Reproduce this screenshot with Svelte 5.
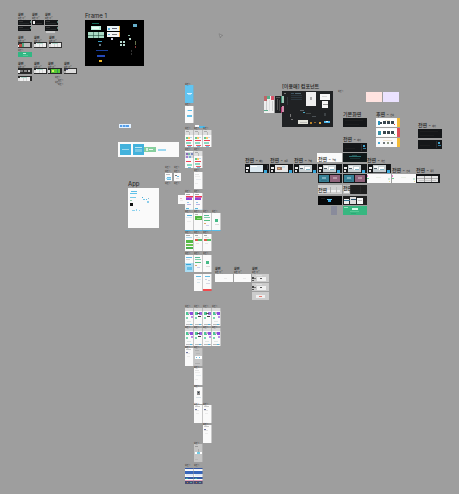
<script>
  // Details are [x, y, width, height, colour], relative to the frame they sit in.
  const art = {
    none: [],
    splash: [[2, 8, 5, 1, '#d8f1ff'], [3, 9, 3, 1, '#a5ddf8']],
    intro: [[3, 4, 4, 1, '#5bbce8'], [2, 9, 5, 2, '#63c0ea'], [2, 4, 1, 1, '#c0e3f3']],
    home: [[0, 0, 9, 5, '#dedede'], [1, 1, 3, 1, '#aaa'], [4, 2, 1, 3, '#bbb'], [1, 7, 2, 2, '#62c78b'], [3, 7, 2, 2, '#ffc36e'], [5, 7, 2, 1, '#b9d8e8'], [1, 10, 6, 1, '#ed4056'], [1, 12, 5, 2, '#8ad9c2'], [2, 15, 5, 1, '#e85d69'], [3, 16, 3, 1, '#71c5e8']],
    mosaic: [[0, 1, 9, 6, '#d8d8df'], [1, 2, 2, 2, '#8a69b8'], [3, 2, 2, 2, '#75b5a5'], [6, 2, 2, 2, '#7b88bd'], [1, 5, 2, 2, '#a67bd0'], [4, 5, 2, 2, '#74b1d2'], [1, 10, 5, 1, '#ef4055'], [2, 13, 5, 2, '#8bdac2'], [3, 16, 3, 1, '#71c5e8']],
    plain: [[1, 2, 4, .5, '#ccc'], [1, 4, 5, .5, '#ddd'], [2, 7, 5, .5, '#d2dce2'], [1, 11, 3, .5, '#ddd']],
    purple: [[1, 1, 4, 1, '#aaa'], [1, 3, 7, 1.5, '#ef344b'], [1, 4.5, 6, 2.5, '#8c45d6'], [4, 4.5, 3, 1, '#d146bd'], [2, 9, 2, 1, '#91c6e8'], [2, 11, 4, 1, '#b9b3e4'], [1, 15, 3, 1, '#5db7d9'], [0, 16, 9, .5, '#b7dff0']],
    login: [[2, 2, 5, 1, '#51aeda'], [1, 4, 6, .5, '#b9dceb'], [2, 8, 4, .5, '#ddd'], [0, 17, 9, 1, '#57bde9']],
    lime: [[1, 1, 3, .5, '#777'], [1, 3, 7, 4, '#50b642'], [3, 5, 4, 1, '#92db7d'], [0, 17, 9, 1, '#57bde9']],
    green: [[1, 2, 5, 1, '#56ba98'], [1, 4, 6, 1, '#80cfae'], [1, 7, 6, 1, '#54bd82'], [1, 10, 2, 1, '#dda36d'], [3, 12, 3, .5, '#a1a1dd'], [0, 17, 9, 1, '#57bde9']],
    done: [[3, 6, 3, 3, '#45ba87'], [3, 11, 4, .5, '#bbb'], [0, 17, 9, 1, '#57bde9']],
    greens: [[1, 1, 4, 1, '#aaa'], [1, 3, 6, .5, '#67bce4'], [1, 6, 7, 3, '#55b947'], [1, 10, 7, 2, '#6bc34e'], [1, 13, 7, 2, '#49af4b']],
    mixed: [[1, 1, 3, 1, '#aaa'], [2, 3, 4, .5, '#ccc'], [1, 5, 3, 2, '#dd5a47'], [4, 5, 4, 2, '#55bd67'], [2, 9, 3, .5, '#ccc']],
    sky: [[1, 2, 6, 1, '#66bee6'], [1, 4, 4, .5, '#bbb'], [0, 8, 9, 9, '#a9dcf3'], [1, 9, 5, 1, '#33a5d8'], [2, 12, 5, 3, '#66bfe7']],
    redend: [[2, 2, 5, 1, '#61bce4'], [2, 5, 2, 1, '#ccd2e0'], [5, 6, 2, 1, '#ccd2e0'], [3, 9, 4, 1, '#d6d8e2'], [0, 15, 9, 2, '#f14a4d']],
    signup: [[2, 2, 5, 1, '#61bce4'], [3, 5, 4, .5, '#b9deed'], [3, 8, 3, 1, '#d4e3e9']],
    event: [[0, 0, 9, 3, '#d9d9d9'], [1, 4, 3, 3, '#4fc894'], [5, 4, 3, 3, '#8d4cdc'], [3, 4, 2, 2, '#c7aed0'], [1, 9, 2, 2, '#7cd6ae'], [6, 8, 2, 2, '#bb91e8'], [2, 13, 4, 1, '#dfe6e4'], [1, 16, 7, 1, '#bbb'], [5, 16, 2, 1, '#55b8df']],
    eventdark: [[0, 0, 9, 3, '#d9d9d9'], [1, 4, 3, 3, '#4fc894'], [5, 4, 3, 3, '#9b66de'], [3, 5, 3, 1, '#555'], [4, 8, 3, 1, '#444'], [1, 9, 2, 2, '#7cd6ae'], [1, 16, 7, 1, '#bbb'], [5, 16, 2, 1, '#55b8df']],
    dialog: [[1, 2, 4, .5, '#999'], [2, 5, 4, .5, '#aaa'], [1, 8, 7, 3, '#fff'], [2, 9, 1, 1, '#67bde4'], [5, 9, 1, 1, '#67bde4'], [1, 15, 5, .5, '#999']],
    badge: [[3, 4, 3, 4, '#888'], [4, 5, 1, 1, '#234'], [2, 10, 5, .5, '#b5cbd5']],
    list: [[1, 1, 5, .5, '#999'], [1, 4, 2, 1, '#6f78a5'], [1, 5, 4, .5, '#ccc'], [2, 8, 3, .5, '#ddd']],
    dialog2: [[1, 2, 3, 1, '#999'], [4, 5, 1, 3, '#aaa'], [1, 8, 7, 2, '#fff'], [3, 8, 3, 2, '#71cbe6'], [1, 15, 3, .5, '#aaa']],
    blue: [[0, 0, 9, 1, '#3558a4'], [1, 1, 7, .5, '#e7ecf5'], [0, 3, 9, 3, '#3765ba'], [1, 6, 7, 2, '#e0e8f5'], [0, 9, 9, 2, '#3058a5'], [1, 10, 2, 1, '#3aa79b'], [0, 12, 9, 1, '#e5a8bc'], [0, 13, 9, 3, '#4a4d73'], [2, 14, 1, 1, '#bc7f42'], [5, 14, 2, 1, '#559f9f']],
    frame1: [[7, 3, 7, 1, '#126b5a'], [6, 6, 10, 4, '#baf0dc'], [7, 7, 7, 2, '#e9fff7'], [3, 12, 16, 6, '#a8d9c3'], [8, 12, .5, 6, '#173d2e'], [13, 12, .5, 6, '#173d2e'], [3, 15, 16, .5, '#173d2e'], [22, 6, 13, 5, '#eaf4f7'], [23, 8, 2, 2, '#59b4dd'], [27, 8, 5, 1, '#667'], [34, 6, 1, 5, '#f3b84b'], [22, 12, 13, 5, '#f3f3f3'], [23, 14, 2, 1, '#59b4dd'], [27, 14, 5, 1, '#777'], [34, 12, 1, 5, '#f3a84b'], [48, 4, 4, 3, '#65aeca'], [26, 18, 2, 2, '#ccd'], [35, 21, 2, 2, '#b5d8ce'], [38, 21, 2, 2, '#b5d8ce'], [35, 24, 2, 2, '#b5d8ce'], [38, 24, 2, 2, '#b5d8ce'], [43, 15, 2, 1, '#8cb8a4'], [44, 18, 2, 2, '#bcd7cd'], [13, 21, 4, 1, '#379cc5'], [14, 24, 2, 2, '#627784'], [11, 30, 12, 1, '#183d9c'], [12, 35, 8, 2, '#2549b7'], [14, 40, 3, 2, '#edb72d'], [50, 21, 1, 4, '#65714d'], [50, 26, 1, 2, '#8c3b3b'], [46, 30, 1, 2, '#333'], [46, 33, 1, 2, '#333']],
    app: [[3, 3, 6, 1, '#5dbde6'], [2, 5, 7, 1, '#62c3ea'], [2, 9, 6, 1, '#79cbea'], [2, 12, 2, 1, '#98c9ad'], [2, 15, 3, 3, '#111'], [14, 9, 1, 1, '#4aafd9'], [15, 11, 2, 1, '#72c5e8'], [18, 11, 1, 1, '#5bbbe5'], [19, 13, 2, 2, '#8ccdea'], [20, 10, 1, 1, '#87bdd2'], [4, 22, 3, 1, '#8cd2ee'], [8, 21, 1, 2, '#8cd2ee'], [11, 22, 1, 1, '#8cd2ee']],
    banner: [[2, 2, 11, 11, '#43b2dc'], [4, 7, 7, 1, '#9cd8ed'], [15, 2, 11, 11, '#43b2dc'], [17, 5, 7, 1, '#bce6f3'], [17, 7, 7, 3, '#79c7e2'], [26, 5, 12, 5, '#86cf9e'], [28, 6, 2, 3, '#d9f1e0'], [31, 7, 4, 1, '#eaf8ee'], [40, 7, 8, 2, '#9bd7f0']],
    chip: [[1, 1, 9, 2, '#559ee9'], [3, 1, 1, 2, '#b4d5f4'], [6, 1, 1, 2, '#8fbff0']],
    mini: [[1, 1, 4, 1, '#bbb'], [2, 4, 4, 3, '#69bee8'], [1, 5, 5, 1, '#ace0f4']],
    mini2: [[1, 2, 2, 1, '#777'], [3, 3, 2, 1, '#67b5df'], [2, 5, 3, .5, '#bbb']],
    pinkdot: [[2, 3, 2, 1, '#f0bfcb'], [2, 5, 3, .5, '#ddd']],
    darkrow: [[1, 1, 4, .5, '#555'], [1, 3, 10, .5, '#353b3b'], [12, 1, 1, 2, '#557f78']],
    darkwhite: [[1, 1, 2, 3, '#eee'], [4, 3, 6, .5, '#444']],
    lightrow: [[2, 1, 10, 4, '#eee'], [0, 2, 2, 3, '#ddd'], [5, 2, .5, 3, '#bbb'], [8, 2, .5, 3, '#bbb'], [3, 1, 6, .5, '#6ebea6']],
    redrow: [[1, 2, 3, 3, '#be4d43'], [4, 1, 2, 4, '#4fa480'], [6, 1, 6, 4, '#bbb'], [0, 3, 1, 2, '#eee']],
    darkcards: [[0, 2, 2, 3, '#eee'], [2, 2, 3, 2, '#777'], [6, 2, 3, 2, '#888'], [10, 2, 2, 2, '#bbb']],
    limerow: [[0, 2, 2, 3, '#ddd'], [3, 1, 9, 4, '#58ca36'], [4, 2, 2, 2, '#d4f063'], [9, 1, 1, 4, '#319d54']],
    wide: [[0, 3, 2, 2, '#aaa'], [2, 1, 10, 4, '#ddd'], [2, 1, 2, 1, '#558']],
    greenpanel: [[5, 1, 3, 1, '#b8f1d8'], [5, 3, 5, .5, '#78d5ad']],
    components: [[2, 2, 2, 1, '#777'], [9, 2, 3, 1, '#3c5261'], [13, 2, 6, 1, '#526671'], [9, 4, 11, .5, '#384d5b'], [9, 6, 11, .5, '#384d5b'], [9, 8, 11, .5, '#384d5b'], [5, 6, 1, 8, '#35393d'], [24, 1, 10, 14, '#eee'], [28, 6, 2, 3, '#aaa'], [38, 3, 10, 6, '#f6f6f6'], [40, 5, 5, .5, '#bbb'], [40, 10, 6, 7, '#f6f6f6'], [41, 13, 5, .5, '#333'], [18, 19, 4, 1, '#5a6369'], [21, 21, 2, 1, '#49a8c2'], [24, 22, 5, .5, '#6a736c'], [30, 25, 4, .5, '#768087'], [8, 23, 1, 3, '#777'], [9, 28, 2, 1, '#777'], [42, 22, 2, 3, '#3d4245'], [16, 29, 10, 4, '#e4e4dc'], [18, 31, 7, .5, '#999'], [28, 31, 2, 2, '#bd8428'], [32, 31, 2, 1, '#8c612a'], [37, 31, 2, 2, '#d9a341'], [42, 30, 6, 2, '#4bb7ec'], [44, 30, 2, 1, '#d7f0fd'], [1, 17, 1, 4, '#9a578a']],
    strips: [[0, 0, 3, 5, '#bd6568'], [3, 0, 3, 3, '#54b28d'], [7, 0, 3, 4, '#d95268'], [2, 5, 1, 10, '#ccc'], [5, 4, 1, 11, '#ddd'], [8, 5, 1, 10, '#ccc'], [0, 14, 4, 1, '#5aae8c']],
    strips2: [[1, 1, 4, 1, '#555'], [2, 3, 1, 11, '#555'], [4, 4, 1, 11, '#444'], [6, 0, 1, 7, '#3a8e72'], [6, 11, 1, 6, '#b53875'], [7, 0, 2, 7, '#9dc8b7'], [7, 10, 2, 6, '#cf8ca8']],
    console: [[1, 3, 3, 2, '#eee'], [1, 6, 2, 2, '#ddd'], [5, 1, 13, 7, '#dbe8f0'], [6, 2, 6, 1, '#fff'], [19, 6, 3, 3, '#38a8dc'], [22, 1, 1, 4, '#363b43'], [5, 8, 13, .5, '#6c7479']],
    console2: [[1, 3, 3, 2, '#eee'], [1, 6, 2, 2, '#ddd'], [5, 1, 13, 7, '#e8e8e8'], [7, 3, 5, 3, '#9b7565'], [8, 4, 2, 1, '#e1b36c'], [12, 2, 3, 2, '#c7dfeb'], [19, 6, 3, 3, '#38a8dc'], [5, 8, 13, .5, '#6c7479']],
    console3: [[1, 3, 3, 2, '#eee'], [1, 6, 2, 2, '#ddd'], [5, 1, 13, 7, '#c8d0d3'], [6, 2, 4, 3, '#f3f3f3'], [11, 3, 5, 3, '#fff'], [6, 4, 3, 1, '#52616c'], [12, 5, 4, 1, '#82b4c6'], [19, 6, 3, 3, '#38a8dc'], [5, 8, 13, .5, '#6c7479']],
    clock: [[18, 1, .5, 7, '#444'], [20, 2, 2, 2, '#46a6cf'], [20, 5, 3, 1, '#367e9d'], [2, 5, 10, .5, '#272727']],
    dark: [[2, 2, 18, .5, '#262626'], [2, 6, 14, .5, '#242424']],
    terminal: [[6, 3, 12, 1, '#2b7272'], [9, 2, 5, .5, '#357d7d'], [7, 5, 10, .5, '#225252']],
    pair: [[1, 1, 10, 7, '#377f94'], [12, 1, 10, 7, '#90637b'], [4, 3, 4, 2, '#79adba'], [15, 3, 4, 2, '#b798a8'], [3, 6, 6, .5, '#285e70']],
    choice: [[1, 1, 22, 7, '#fff'], [2, 3, 2, 4, '#2892bb'], [4, 4, 2, 2, '#36434c'], [7, 3, 3, 3, '#39474f'], [11, 3, 3, 3, '#39474f'], [15, 3, 3, 3, '#39474f'], [9, 2, 5, .5, '#ead6b0'], [18, 6, 1, 1, '#d75248'], [21, 0, 3, 9, '#f3ba35']],
    choicered: [[1, 1, 22, 7, '#fff'], [2, 3, 3, 4, '#3691a8'], [7, 3, 3, 3, '#39474f'], [11, 3, 3, 3, '#39474f'], [15, 3, 3, 3, '#39474f'], [18, 6, 1, 1, '#5bb66f'], [21, 0, 3, 9, '#df4e59']],
    choicelite: [[2, 4, 2, 2, '#40a6d4'], [7, 4, 2, 2, '#70777b'], [11, 4, 2, 2, '#8f9b84'], [15, 4, 2, 2, '#70777b'], [7, 2, 9, .5, '#edd4ac'], [21, 0, 3, 9, '#f3ba35']],
    corners: [[0, 1, 1, 2, '#e78bcc'], [0, 4, 2, 1, '#72c792'], [9, 3, 5, .5, '#dde7d6'], [21, 4, 2, 2, '#c9ead9'], [22, 7, 1, 1, '#efe39c']],
    greyfields: [[1, 5, 21, 2, '#eee'], [12, 2, 1, 6, '#aaa'], [18, 2, 1, 6, '#bbb']],
    halfdark: [[0, 0, 7, 9, '#bdbdbd'], [1, 6, 5, 2, '#eee'], [7, 0, 1, 9, '#333'], [17, 1, .5, 7, '#333']],
    bluecup: [[9, 3, 5, 1, '#69c9ef'], [10, 4, 3, 2, '#41abe2'], [3, 2, 4, .5, '#333']],
    sheets: [[1, 3, 5, 5, '#eee'], [7, 1, 6, 7, '#ddd'], [14, 2, 6, 6, '#f5f5f5'], [1, 4, 6, 1, '#347495'], [8, 3, 5, 1, '#2d536a'], [15, 4, 4, .5, '#888']],
    table: [[1, 2, 21, 6, '#e6e6e6'], [8, 2, .5, 6, '#444'], [15, 2, .5, 6, '#444'], [1, 4, 21, .5, '#777'], [3, 6, 17, .5, '#aaa']],
    preview: [[0, 3, 2, 2, '#444'], [0, 6, 2, 1, '#555'], [2, 4, 2, 1, '#777'], [5, 3, 9, 4, '#f0f0f0'], [8, 4, 2, 1, '#555'], [4, 1, 6, .5, '#eee']],
    alert: [[4, 3, 9, 3, '#eee'], [7, 4, 3, 1, '#e7766b']],
    faint: [[9, 4, 3, .5, '#ddd']],
    mintpanel: [[9, 2, 6, 2, '#d2f7e5'], [7, 5, 9, .5, '#7bd9ad'], [1, 1, 4, 1, '#95e0bd'], [8, 7, 5, .5, '#239c6c']]
  };

  const white = '#fafafa';
  const black = '#151719';
  const columns = [185, 194, 203, 212];

  // Phone screens: each row is its top edge, height, first column and drawings.
  const phones = [
    [85, 18, 0, ['splash']],
    [106, 17, 0, ['intro']],
    [130, 17, 0, ['home', 'home', 'home']],
    [151, 17, 0, ['mosaic', 'home']],
    [172, 17, 1, ['plain']],
    [193, 17, 0, ['purple', 'purple']],
    [213, 18, 0, ['login', 'lime', 'green', 'done']],
    [234, 17, 0, ['greens', 'mixed', 'mixed']],
    [255, 17, 0, ['sky', 'green', 'done']],
    [274, 17, 1, ['signup', 'redend']],
    [308, 18, 0, ['event', 'eventdark', 'eventdark', 'event']],
    [328, 18, 0, ['event', 'eventdark', 'event', 'event']],
    [348, 18, 0, ['list', 'dialog']],
    [368, 17, 1, ['plain']],
    [387, 17, 1, ['badge']],
    [405, 18, 1, ['list', 'list']],
    [425, 18, 2, ['list']],
    [444, 18, 1, ['dialog2']],
    [468, 16, 0, ['blue', 'blue']]
  ].flatMap(([y, h, first, names]) =>
    names.map((name, i) => ({
      x: columns[first + i], y, w: 9, h, art: name, phone: true,
      fill: name === 'splash' ? '#61c4f1' : name.startsWith('dialog') ? '#c4c4c4' : white
    }))
  );

  const others = [
    [195, 125, 4, 2, white, 'none'], [199, 126, 6, 2, '#50b9e9', 'none'],
    [178, 195, 7, 9, white, 'pinkdot'],
    [85, 20, 59, 46, '#000', 'frame1'],
    [18, 20, 13, 5, black, 'darkrow'], [18, 26, 13, 5, black, 'darkrow'],
    [32, 20, 12, 5, black, 'darkwhite'],
    [45, 20, 13, 5, black, 'darkrow'], [45, 26, 13, 5, black, 'darkrow'], [46, 31, 9, 2, '#c9c9c9', 'none'],
    [18, 42, 14, 6, '#343434', 'redrow'], [34, 42, 13, 6, '#343434', 'lightrow'], [49, 42, 13, 6, '#343434', 'lightrow'],
    [18, 52, 14, 5, '#31b783', 'greenpanel'],
    [18, 68, 14, 6, '#292929', 'darkcards'], [34, 68, 13, 6, '#292929', 'lightrow'],
    [48, 68, 14, 6, '#292929', 'limerow'], [64, 68, 13, 6, '#343434', 'wide'],
    [18, 76, 14, 5, '#292929', 'lightrow'],
    [119, 124, 12, 4, '#e3f1ff', 'chip'],
    [118, 142, 61, 15, white, 'banner'],
    [165, 173, 7, 8, white, 'mini'], [174, 173, 7, 8, white, 'mini2'],
    [128, 188, 31, 40, white, 'app'],
    [215, 274, 18, 8, white, 'faint'], [234, 274, 17, 8, white, 'faint'],
    [252, 274, 17, 8, '#ccc', 'preview'], [252, 283, 17, 8, '#ccc', 'preview'], [252, 292, 17, 8, '#ccc', 'alert'],
    [264, 96, 10, 17, '#eee', 'strips'],
    [282, 91, 51, 36, '#202224', 'components'],
    [275, 96, 9, 17, '#202224', 'strips2'],
    [366, 92, 16, 10, '#ffe3e0', 'none'], [383, 92, 16, 10, '#ebe2ff', 'none'],
    [343, 118, 24, 9, black, 'dark'], [343, 143, 24, 9, black, 'clock'],
    [376, 118, 24, 9, white, 'choice'], [376, 128, 24, 9, white, 'choicered'], [376, 138, 24, 9, white, 'choicelite'],
    [418, 129, 24, 9, black, 'dark'], [418, 140, 24, 9, black, 'clock'],
    [317, 153, 25, 9, white, 'none'], [343, 153, 24, 9, '#101819', 'terminal'],
    [245, 164, 24, 9, black, 'console'], [270, 164, 23, 9, black, 'console2'], [294, 164, 23, 9, black, 'console3'],
    [318, 164, 24, 9, black, 'console3'], [343, 164, 24, 9, black, 'console3'], [368, 164, 23, 9, black, 'console3'],
    [318, 174, 24, 9, black, 'pair'], [343, 174, 24, 9, black, 'pair'],
    [367, 174, 24, 9, white, 'corners'], [392, 174, 24, 9, white, 'corners'], [416, 174, 24, 9, black, 'table'],
    [318, 185, 24, 9, '#d0d0d0', 'greyfields'], [343, 185, 24, 9, '#202020', 'halfdark'],
    [318, 196, 24, 9, '#08090a', 'bluecup'], [343, 196, 24, 9, '#202020', 'sheets'],
    [343, 206, 24, 9, '#37b780', 'mintpanel'], [331, 206, 6, 9, '#898b9b', 'none']
  ].map(([x, y, w, h, fill, name]) => ({ x, y, w, h, fill, art: name, phone: false }));

  const frames = [...phones, ...others];

  const titles = [
    [85, 12, 'Frame 1'], [128, 180, 'App']
  ];
  const sections = [
    [282, 83, '[이용매] 컴포넌트', ''],
    [343, 111, '기본화면', ''], [343, 136, '전면 -', '대기'], [376, 111, '후면 -', '선택'], [418, 122, '전면 -', '대기'],
    [245, 157, '전면 -', '메뉴'], [270, 157, '전면 -', '주문'], [294, 157, '전면 -', '결제'],
    [318, 156, '전면 -', '결제'], [367, 157, '전면 -', '확인'], [392, 167, '전면 -', '안내'], [416, 167, '전면 -', '목록'],
    [318, 187, '전면', ''], [343, 185, '전면', '']
  ];
  const groups = [
    [18, 13], [32, 13], [45, 13], [18, 36], [34, 36], [49, 36],
    [18, 62], [34, 62], [48, 62], [64, 62],
    [215, 267], [234, 267], [252, 267]
  ];
  const tags = [
    ...[[83, 0, 1], [103, 0, 1], [127, 0, 3], [148, 0, 2], [169, 1, 1], [190, 0, 2], [210, 0, 4], [231, 0, 3],
      [252, 0, 3], [305, 0, 4], [326, 0, 4], [346, 0, 2], [366, 1, 1], [385, 1, 1], [403, 1, 2], [423, 2, 1], [442, 1, 1], [464, 0, 2]
    ].flatMap(([y, first, n]) => Array.from({ length: n }, (_, i) => [columns[first + i], y])),
    [165, 166], [174, 166], [165, 170], [174, 170], [165, 182], [174, 182], [338, 90],
    [18, 49], [55, 76], [58, 79], [55, 81], [58, 83]
  ];
</script>

<main class="board" aria-label="Design canvas">
  {#each frames as f}
    <div class="frame" class:phone={f.phone} style="left:{f.x}px;top:{f.y}px;width:{f.w}px;height:{f.h}px;background:{f.fill}">
      <svg viewBox="0 0 {f.w} {f.h}" aria-hidden="true">
        {#each art[f.art] as [x, y, w, h, fill]}
          <rect {x} {y} width={w} height={h} {fill} />
        {/each}
      </svg>
    </div>
  {/each}

  {#each titles as [x, y, text]}
    <h2 class="title" style="left:{x}px;top:{y}px">{text}</h2>
  {/each}
  {#each sections as [x, y, text, note]}
    <h3 class="section" style="left:{x}px;top:{y}px">{text} <small>{note}</small></h3>
  {/each}
  {#each groups as [x, y]}
    <p class="group" style="left:{x}px;top:{y}px"><b>화면</b><small>화면 목록</small></p>
  {/each}
  {#each tags as [x, y]}
    <span class="tag" style="left:{x}px;top:{y}px">화면 1</span>
  {/each}

  <svg class="cursor" viewBox="0 0 6 6" aria-hidden="true">
    <path d="M1 .8 4.8 2.5 3 3 2.4 5Z" fill="#aaa" stroke="#777" stroke-width=".6" />
  </svg>
</main>

<style>
  :global(body) {
    margin: 0;
    background: #9e9e9e;
  }

  .board {
    position: relative;
    min-height: 100vh;
    overflow: hidden;
    background: #9e9e9e;
    color: #222;
    font-family: Inter, "Noto Sans CJK KR", sans-serif;
  }

  .frame,
  .title,
  .section,
  .group,
  .tag,
  .cursor {
    position: absolute;
    margin: 0;
    white-space: nowrap;
  }

  .frame svg {
    display: block;
    width: 100%;
    height: 100%;
  }

  .phone::after {
    content: "";
    position: absolute;
    inset: 0;
    border-right: 1px solid rgb(150 150 150 / 50%);
  }

  .title {
    font-size: 6px;
    line-height: 7px;
    font-weight: 400;
  }

  .section {
    font-size: 5px;
    line-height: 7px;
    font-weight: 500;
  }

  .section small {
    font-size: 2px;
  }

  .group {
    display: flex;
    flex-direction: column;
    font-size: 3px;
    line-height: 4px;
  }

  .group b {
    font-weight: 700;
  }

  .group small {
    font-size: 2px;
    line-height: 2px;
  }

  .tag {
    color: #333;
    font-size: 2px;
    line-height: 2px;
  }

  .cursor {
    left: 218px;
    top: 33px;
    width: 6px;
    height: 6px;
  }
</style>
